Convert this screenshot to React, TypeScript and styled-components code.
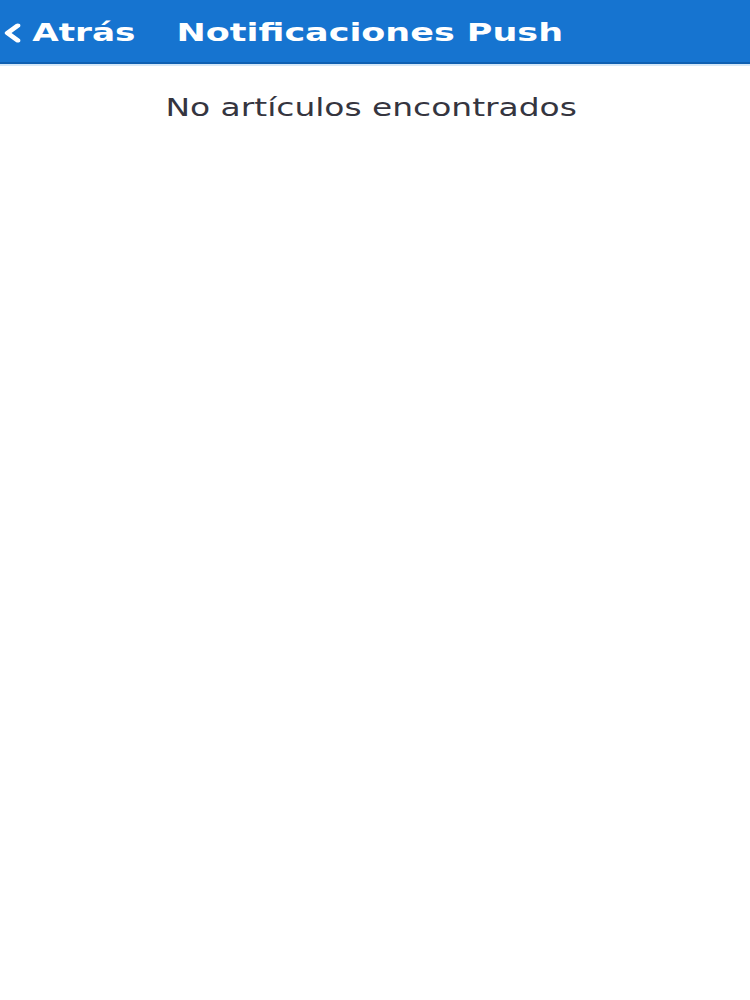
import React from "react";
import styled, { createGlobalStyle } from "styled-components";

// the screenshot is stretched wide, so the text rows are scaled on x
const STRETCH = 1.37;

const GlobalStyle = createGlobalStyle`
  html, body {
    margin: 0;
    padding: 0;
    background: #ffffff;
    font-family: "DejaVu Sans", Verdana, sans-serif;
  }
`;

const Page = styled.div`
  display: flex;
  flex-direction: column;
  min-height: 1000px;
  background: #ffffff;
`;

const Header = styled.header`
  display: flex;
  align-items: center;
  box-sizing: border-box;
  height: 64px;
  padding-top: 3px;
  background: #1674d0;
  border-bottom: 2px solid #0f60b2;
  box-shadow: 0 2px 0 #d6e8f8;
  color: #ffffff;
  overflow: hidden;
`;

const HeaderRow = styled.div`
  display: flex;
  align-items: center;
  padding-left: 3px;
  transform: scaleX(${STRETCH});
  transform-origin: left center;
`;

const BackButton = styled.button`
  display: flex;
  align-items: center;
  gap: 8.5px;
  background: none;
  border: none;
  padding: 0;
  color: #ffffff;
  font-family: inherit;
  font-size: 25px;
  font-weight: 700;
  line-height: 1;
  cursor: pointer;
`;

const Title = styled.h1`
  margin: 0 0 0 30px;
  font-size: 25.5px;
  font-weight: 700;
  line-height: 1;
`;

const Body = styled.main`
  display: flex;
  justify-content: center;
  padding-top: 30px;
`;

const Empty = styled.p`
  display: inline-block;
  margin: 0 0 0 -7px;
  font-size: 24px;
  line-height: 28px;
  color: #35353f;
  transform: scaleX(${STRETCH});
  transform-origin: center;
`;

const Chevron = () => (
  <svg width="12" height="20" viewBox="0 0 12 20">
    <path
      d="M10 2.5 L2.5 10 L10 17.5"
      fill="none"
      stroke="#ffffff"
      strokeWidth="4"
      strokeLinecap="round"
      strokeLinejoin="round"
    />
  </svg>
);

export default function App() {
  return (
    <Page>
      <GlobalStyle />
      <Header>
        <HeaderRow>
          <BackButton>
            <Chevron />
            Atrás
          </BackButton>
          <Title>Notificaciones Push</Title>
        </HeaderRow>
      </Header>
      <Body>
        <Empty>No artículos encontrados</Empty>
      </Body>
    </Page>
  );
}
